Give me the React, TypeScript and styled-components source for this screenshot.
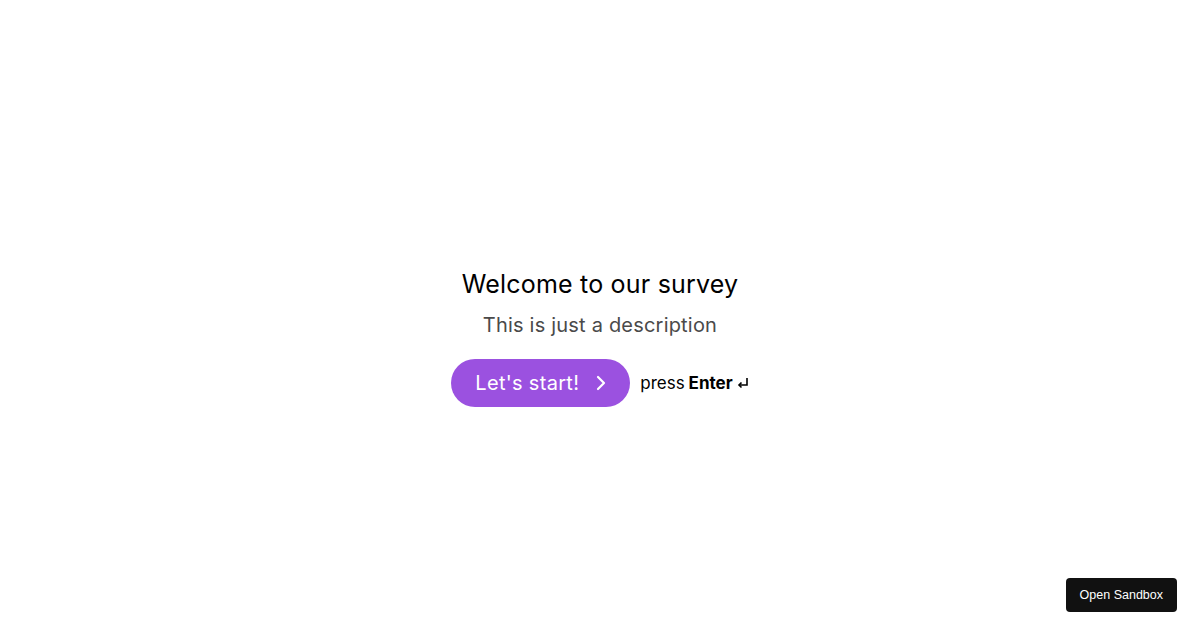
import styled, { createGlobalStyle } from "styled-components";

const Global = createGlobalStyle`
  html, body, #root { margin: 0; height: 100%; }
  body { background: #fff; font-family: Inter, "Noto Sans", sans-serif; }
`

const Page = styled.main`
  height: 100%;
  display: flex;
  flex-direction: column;
  align-items: center;
  justify-content: center;
  padding-top: 43px;
  box-sizing: border-box;
`
const Title = styled.h1`
  margin: 0;
  font-size: 25px;
  font-weight: 400;
  color: #000;
  letter-spacing: 0.2px;
  line-height: 34px;
`
const Description = styled.p`
  margin: 9px 0 0;
  font-size: 20px;
  font-weight: 400;
  color: #4a4a4a;
  letter-spacing: 0.2px;
  line-height: 30px;
`
const Actions = styled.div`
  margin-top: 19px;
  display: flex;
  align-items: center;
  gap: 10px;
`
const StartButton = styled.button`
  height: 48px;
  padding: 0 21px 0 24px;
  border: none;
  border-radius: 24px;
  background: #9b51e0;
  color: #fff;
  font-family: inherit;
  font-size: 20px;
  letter-spacing: 0.3px;
  display: flex;
  align-items: center;
  gap: 14px;
  cursor: pointer;
`
const Hint = styled.span`
  font-size: 17px;
  color: #000;
  display: flex;
  align-items: center;
  gap: 4px;
  & b { font-weight: 700; }
`
const SandboxLink = styled.a`
  position: fixed;
  right: 23px;
  bottom: 18px;
  height: 34px;
  padding: 0 14px;
  display: flex;
  align-items: center;
  background: #111;
  color: #fff;
  border-radius: 4px;
  font-family: "Liberation Sans", Arial, sans-serif;
  font-size: 12.5px;
  text-decoration: none;
`

export default function App() {
  return (
    <>
      <Global />
      <Page>
        <Title>Welcome to our survey</Title>
        <Description>This is just a description</Description>
        <Actions>
          <StartButton>
            Let's start!
            <svg width="16" height="18" viewBox="0 0 16 18" fill="none" stroke="#fff" strokeWidth="2.2" strokeLinecap="round" strokeLinejoin="round">
              <path d="M5 3l6 6-6 6" />
            </svg>
          </StartButton>
          <Hint>
            press <b>Enter</b>
            <svg width="12" height="12" viewBox="0 0 12 12" fill="none" stroke="#000" strokeWidth="1.6">
              <path d="M10 1v7H2" />
              <path d="M4.5 5.5L2 8l2.5 2.5" />
            </svg>
          </Hint>
        </Actions>
      </Page>
      <SandboxLink href="#">Open Sandbox</SandboxLink>
    </>
  )
}
